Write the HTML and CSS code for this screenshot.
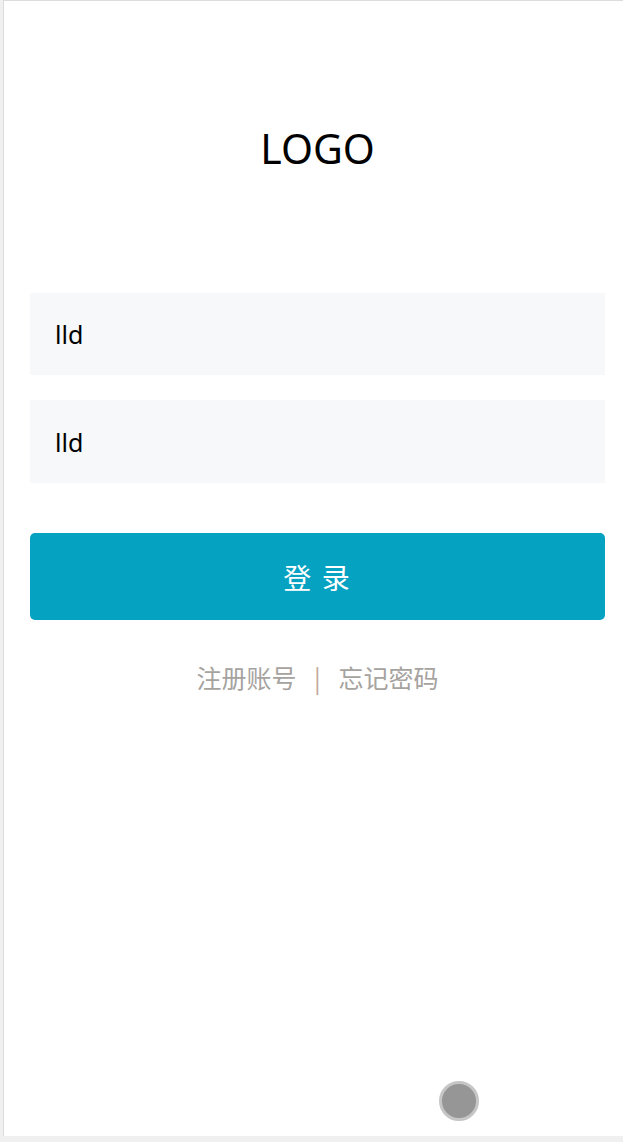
FILE: index.html
```html
<!DOCTYPE html>
<html lang="zh">
<head>
<meta charset="utf-8">
<link rel="stylesheet" href="styles.css">
</head>
<body>
<div class="frame">
  <div class="logo">LOGO</div>
  <form class="form">
    <div class="field">lld</div>
    <div class="field">lld</div>
    <button type="button" class="btn">登 录</button>
  </form>
  <div class="links">
    <span>注册账号</span>
    <span class="sep">|</span>
    <span>忘记密码</span>
  </div>
  <div class="fab"></div>
</div>
</body>
</html>
```

FILE: styles.css
```css
html, body {
  margin: 0;
  padding: 0;
}
body {
  background: #f0f0f0;
  font-family: "Noto Sans", "Noto Sans CJK SC", sans-serif;
  height: 1142px;
  overflow: hidden;
}
.frame {
  position: relative;
  margin-left: 3px;
  height: 1136px;
  background: #fff;
  border-top: 1px solid #dcdcdc;
  border-left: 1px solid #dcdcdc;
  box-sizing: border-box;
  padding: 0 18px 0 26px;
}
.logo {
  text-align: center;
  font-size: 41px;
  line-height: 1;
  padding-top: 127px;
  color: #000;
  height: 166px;
  box-sizing: border-box;
}
.form {
  margin: 126px 0 0 0;
  display: flex;
  flex-direction: column;
}
.field {
  background: #f7f8fa;
  height: 82px;
  display: flex;
  align-items: center;
  padding-left: 25px;
  font-size: 25px;
  color: #000;
  margin-bottom: 25px;
}
.field + .field {
  height: 83px;
  margin-bottom: 50px;
}
.btn {
  height: 87px;
  background: #06a2c2;
  border: none;
  border-radius: 5px;
  color: #fff;
  font-family: "Noto Sans CJK SC", sans-serif;
  font-size: 28px;
  letter-spacing: 2px;
  padding: 0;
}
.links {
  margin-top: 37px;
  text-align: center;
  font-family: "Noto Sans CJK SC", sans-serif;
  font-size: 25px;
  color: #a6a39f;
  line-height: 40px;
}
.links .sep {
  margin: 0 12px;
  color: #c3a999;
}
.fab {
  position: absolute;
  left: 435px;
  top: 1080px;
  width: 34px;
  height: 34px;
  border-radius: 50%;
  background: #969696;
  border: 3px solid #c6c6c6;
}
```
